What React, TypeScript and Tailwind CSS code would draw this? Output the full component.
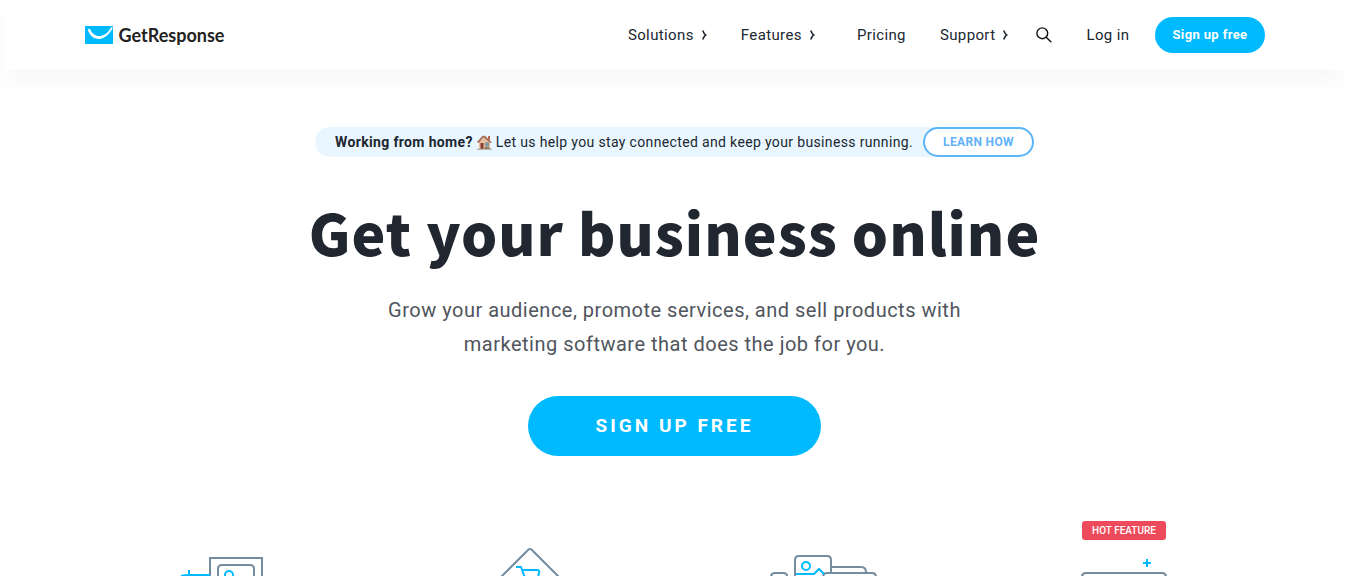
import React from 'react'

type NavItemProps = {
    name: string,
    href: string,
    hasMenu?: boolean
} & React.HTMLProps<HTMLLIElement>

const navigationLinks: NavItemProps[] = [
    { name: 'Solutions', href: '#solutions', hasMenu: true, className: 'mr-[34px]' },
    { name: 'Features', href: '#features', hasMenu: true, className: 'mr-[42px]' },
    { name: 'Pricing', href: '#pricing', className: 'mr-[34px]' },
    { name: 'Support', href: '#support', hasMenu: true, className: 'mr-7' },
]

function Logo() {
    return (
        <a href="#home" className="flex items-center gap-1.5 font-['Lato',sans-serif] text-[18px] font-bold leading-6 text-[#222]">
            <svg width="28" height="18" viewBox="0 0 27 18" preserveAspectRatio="none" aria-hidden="true">
                <path d="M0 0h27v18H0z" fill="#00baff" />
                <path d="M2.7 3.2C5.4 15.4 19.8 17.4 26.9 1.6L25.3 1.3C18.8 13.3 8.6 12.2 4.8 2.7Z" fill="#fff" />
            </svg>
            GetResponse
        </a>
    )
}

function NavItem( { name, href, hasMenu, className }: NavItemProps ) {
    return (
        <li className={className}>
            <a href={href} className="flex items-center gap-2">
                {name}
                {hasMenu && (
                    <svg width="5" height="10" viewBox="0 0 5 10" fill="#202730" aria-hidden="true">
                        <path d="M0 .5H1.8C2.3 2.5 3.3 4 4.6 4.6V5.4C3.3 6 2.3 7.5 1.8 9.5H0C.5 7.6 1.5 6 2.6 5C1.5 4 .5 2.4 0 .5Z" />
                    </svg>
                )}
            </a>
        </li>
    )
}

function Navbar() {
    return (
        <header className="bg-white shadow-[0_12px_20px_0_rgba(0,0,0,0.03)]">
            <div className="mx-auto flex h-[70px] max-w-[1180px] items-center justify-between">
                <Logo />
                <nav className="flex items-center text-[15px] leading-6 tracking-wide">
                    <ul className="flex items-center">
                        {navigationLinks.map( ( link ) => (
                            <NavItem key={link.name} name={link.name} href={link.href} hasMenu={link.hasMenu} className={link.className} />
                        ) )}
                    </ul>
                    <button type="button" aria-label="Search" className="mr-[34px]">
                        <svg width="16" height="16" viewBox="0 0 16 16" fill="none" stroke="#111" strokeWidth="1.4">
                            <circle cx="6.3" cy="6.3" r="5.4" />
                            <path d="M10.2 10.2L15.3 15.3" />
                        </svg>
                    </button>
                    <a href="#login" className="mr-[26px]">Log in</a>
                    <a href="#signup" className="rounded-full bg-[#00baff] px-[17px] py-2 text-[13px] font-bold leading-5 text-white">Sign up free</a>
                </nav>
            </div>
        </header>
    )
}

function House() {
    return (
        <svg width="15" height="15" viewBox="0 0 15 15" aria-hidden="true">
            <path d="M2 7L7.5 2L13 7V14H2Z" fill="#e5c3a0" />
            <path d="M11 1h2v5l-2-2Z" fill="#b4654d" />
            <path d="M0 7L5.5 .8H8L15 7.5L13.5 8L6.5 2.6L1.4 8.2Z" fill="#a7705c" />
            <path d="M3.5 8h3v6h-3Z" fill="#8b3b32" />
            <path d="M8.3 7.6h3.5v3.6H8.3Z" fill="#6d9fc0" stroke="#a58978" strokeWidth=".6" />
            <path d="M0 13.7h15v1H0Z" fill="#a99b8a" />
            <path d="M7.5 12h5v2h-5Z" fill="#927966" />
        </svg>
    )
}

function Announcement() {
    return (
        <div className="flex h-[30px] items-center rounded-full bg-[#e9f6ff] pl-5 text-[14px] tracking-wide">
            <p className="mr-2.5 flex items-center gap-1 leading-5">
                <strong className="font-bold">Working from home?</strong>
                <House />
                <span>Let us help you stay connected and keep your business running.</span>
            </p>
            <a href="#learn" className="rounded-full border-2 border-[#5bb5f8] bg-white px-[18px] py-[5px] text-[12px] font-bold leading-4 text-[#62b2fa]">LEARN HOW</a>
        </div>
    )
}

function Hero() {
    return (
        <section className="flex flex-col items-center pt-[57px] text-center">
            <Announcement />
            <h1 className="mt-8 font-['Noto_Sans_CJK_SC',sans-serif] text-[57px] font-black leading-[84px] tracking-[1px]">Get your business online</h1>
            <p className="mt-5 max-w-[600px] text-[20px] leading-[34px] tracking-wide text-[#50555d]">
                Grow your audience, promote services, and sell products with marketing software that does the job for you.
            </p>
            <a href="#signup" className="mt-[35px] rounded-full bg-[#00baff] px-[68px] py-[18px] text-[19px] font-bold leading-6 tracking-[3px] text-white">SIGN UP FREE</a>
        </section>
    )
}

function Features() {
    return (
        <ul className="mx-auto mt-16 grid max-w-[1196px] grid-cols-4 items-end justify-items-center pl-2">
            <li>
                <svg width="108" height="56" viewBox="0 0 108 56" fill="none" strokeWidth="2" aria-label="Website builder">
                    <path d="M31 56V38H83V56" stroke="#748c9f" />
                    <path d="M39 56V49Q39 45 43 45H71Q75 45 75 49V56" stroke="#748c9f" />
                    <circle cx="50" cy="55" r="4" stroke="#00baff" />
                    <path d="M10 50V56M2 56Q5 55 10 55H31" stroke="#00baff" />
                </svg>
            </li>
            <li>
                <svg width="80" height="56" viewBox="0 0 80 56" fill="none" strokeWidth="2" aria-label="Ecommerce">
                    <path d="M11 57L37 31Q40 27 43 31L69 57" stroke="#748c9f" />
                    <path d="M26 47H31L35 58M32 50H47Q50 50 49 53L48 57" stroke="#00baff" />
                </svg>
            </li>
            <li>
                <svg width="116" height="56" viewBox="0 0 116 56" fill="none" strokeWidth="2" aria-label="Paid ads">
                    <path d="M2 57Q2 53 6 53H14Q18 53 18 56" stroke="#748c9f" />
                    <path d="M26 56V40Q26 36 30 36H58Q62 36 62 40V53M62 47H92Q97 47 97 52M54 57Q54 53 58 53H103Q107 53 107 57" stroke="#748c9f" />
                    <circle cx="37" cy="46" r="4" stroke="#00baff" />
                    <path d="M27 54H45L50 49L55 54" stroke="#00baff" />
                </svg>
            </li>
            <li className="flex flex-col items-center self-start">
                <span className="mt-px rounded-[3px] bg-[#ed4b5b] px-2.5 py-0.5 text-[10px] font-medium leading-[15px] text-white">HOT FEATURE</span>
                <svg width="88" height="36" viewBox="0 1 88 36" fill="none" strokeWidth="2" aria-label="Webinars">
                    <path d="M67 20V28M63 24H71" stroke="#00baff" />
                    <path d="M2 38Q2 34 6 34H82Q86 34 86 38" stroke="#748c9f" />
                    <path d="M8 38H9M12 38H13" stroke="#748c9f" />
                </svg>
            </li>
        </ul>
    )
}

function App() {
    return (
        <div className="overflow-hidden bg-white pl-1 font-['Roboto',sans-serif] text-[#202730]">
            <Navbar />
            <main>
                <Hero />
                <Features />
            </main>
        </div>
    )
}

export default App
